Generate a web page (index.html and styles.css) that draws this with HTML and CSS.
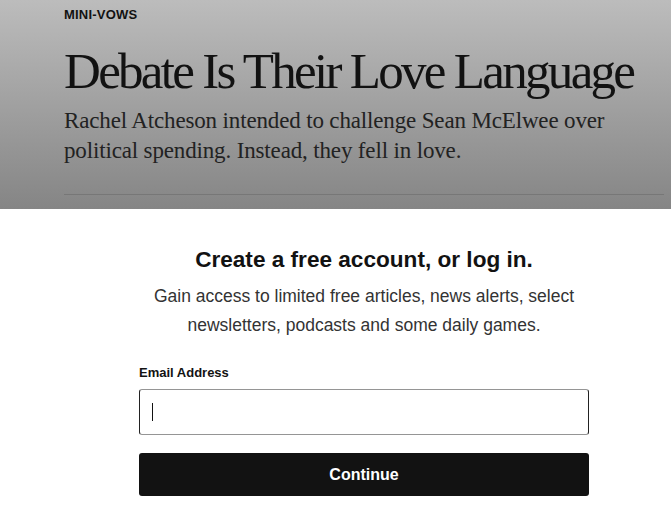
FILE: index.html
```html
<!DOCTYPE html>
<html>
<head>
<meta charset="utf-8">
<link rel="stylesheet" href="styles.css">
</head>
<body>
<header class="article">
  <div class="kicker">MINI-VOWS</div>
  <h1 class="headline">Debate Is Their Love Language</h1>
  <p class="summary">Rachel Atcheson intended to challenge Sean McElwee over political spending. Instead, they fell in love.</p>
  <div class="rule"></div>
</header>
<section class="gate">
  <div class="gate-inner">
    <h2 class="gate-title">Create a free account, or log in.</h2>
    <p class="gate-text">Gain access to limited free articles, news alerts, select newsletters, podcasts and some daily games.</p>
    <label class="field-label">Email Address</label>
    <div class="input"><span class="caret"></span></div>
    <button class="continue">Continue</button>
  </div>
</section>
</body>
</html>
```
FILE: styles.css
```css
html, body {
  margin: 0;
  padding: 0;
  width: 671px;
  height: 510px;
  overflow: hidden;
  background: #fff;
}
.article {
  height: 209px;
  box-sizing: border-box;
  padding: 7px 7px 0 64px;
  background: linear-gradient(#bcbcbc, #858585);
  display: flex;
  flex-direction: column;
}
.kicker {
  font-family: "Liberation Sans", Arial, sans-serif;
  font-weight: 700;
  font-size: 13px;
  line-height: 15px;
  letter-spacing: 0.2px;
  color: #121212;
}
.headline {
  margin: 19px 0 0;
  font-family: "Liberation Serif", "Times New Roman", serif;
  font-weight: 400;
  font-size: 51px;
  line-height: 60px;
  letter-spacing: -2.7px;
  color: #121212;
  white-space: nowrap;
}
.summary {
  margin: 5px 0 0;
  font-family: "Liberation Serif", "Times New Roman", serif;
  font-size: 23px;
  line-height: 30px;
  letter-spacing: -0.15px;
  color: #222;
  width: 580px;
}
.rule {
  margin-top: 28px;
  height: 1px;
  background: #777;
  width: 600px;
}
.gate {
  display: flex;
  padding-left: 139px;
}
.gate-inner {
  width: 450px;
  display: flex;
  flex-direction: column;
}
.gate-title {
  margin: 37px 0 0;
  text-align: center;
  font-family: "Liberation Sans", Arial, sans-serif;
  font-weight: 700;
  font-size: 22.6px;
  line-height: 28px;
  color: #121212;
}
.gate-text {
  margin: 8px 0 0;
  text-align: center;
  font-family: "Liberation Sans", Arial, sans-serif;
  font-size: 17.5px;
  line-height: 29px;
  color: #333;
  padding: 0 4px;
}
.field-label {
  margin-top: 25px;
  font-family: "Liberation Sans", Arial, sans-serif;
  font-weight: 700;
  font-size: 13px;
  line-height: 16px;
  color: #121212;
}
.input {
  margin-top: 8px;
  height: 46px;
  box-sizing: border-box;
  border: 1px solid #959595;
  border-left-color: #222;
  border-right-color: #222;
  border-radius: 3px;
  display: flex;
  align-items: center;
  padding-left: 12px;
}
.caret {
  width: 1px;
  height: 18px;
  background: #121212;
}
.continue {
  margin-top: 18px;
  height: 43px;
  border: none;
  border-radius: 3px;
  background: #121212;
  color: #fff;
  font-family: "Liberation Sans", Arial, sans-serif;
  font-weight: 700;
  font-size: 16px;
}
```
